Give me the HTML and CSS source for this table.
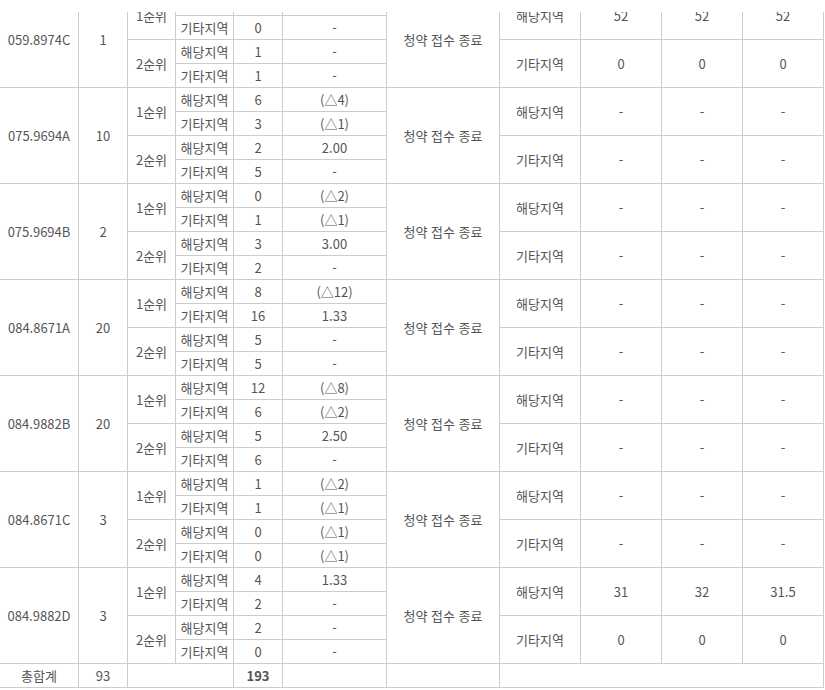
FILE: index.html
```html
<!DOCTYPE html>
<html lang="ko">
<head>
<meta charset="utf-8">
<link rel="stylesheet" href="styles.css">
</head>
<body>
<div class="scroller">
<table class="result">
<colgroup>
<col class="c-type"><col class="c-supply"><col class="c-rank"><col class="c-region"><col class="c-count"><col class="c-rate"><col class="c-status"><col class="c-region2"><col class="c-score"><col class="c-score"><col class="c-score">
</colgroup>
<tbody>
<tr><td rowspan="4">059.8974C</td><td rowspan="4">1</td><td rowspan="2">1순위</td><td>해당지역</td><td>1</td><td>-</td><td rowspan="4">청약 접수 종료</td><td rowspan="2">해당지역</td><td rowspan="2">52</td><td rowspan="2">52</td><td rowspan="2">52</td></tr>
<tr><td>기타지역</td><td>0</td><td>-</td></tr>
<tr><td rowspan="2">2순위</td><td>해당지역</td><td>1</td><td>-</td><td rowspan="2">기타지역</td><td rowspan="2">0</td><td rowspan="2">0</td><td rowspan="2">0</td></tr>
<tr><td>기타지역</td><td>1</td><td>-</td></tr>

<tr><td rowspan="4">075.9694A</td><td rowspan="4">10</td><td rowspan="2">1순위</td><td>해당지역</td><td>6</td><td>(△4)</td><td rowspan="4">청약 접수 종료</td><td rowspan="2">해당지역</td><td rowspan="2">-</td><td rowspan="2">-</td><td rowspan="2">-</td></tr>
<tr><td>기타지역</td><td>3</td><td>(△1)</td></tr>
<tr><td rowspan="2">2순위</td><td>해당지역</td><td>2</td><td>2.00</td><td rowspan="2">기타지역</td><td rowspan="2">-</td><td rowspan="2">-</td><td rowspan="2">-</td></tr>
<tr><td>기타지역</td><td>5</td><td>-</td></tr>

<tr><td rowspan="4">075.9694B</td><td rowspan="4">2</td><td rowspan="2">1순위</td><td>해당지역</td><td>0</td><td>(△2)</td><td rowspan="4">청약 접수 종료</td><td rowspan="2">해당지역</td><td rowspan="2">-</td><td rowspan="2">-</td><td rowspan="2">-</td></tr>
<tr><td>기타지역</td><td>1</td><td>(△1)</td></tr>
<tr><td rowspan="2">2순위</td><td>해당지역</td><td>3</td><td>3.00</td><td rowspan="2">기타지역</td><td rowspan="2">-</td><td rowspan="2">-</td><td rowspan="2">-</td></tr>
<tr><td>기타지역</td><td>2</td><td>-</td></tr>

<tr><td rowspan="4">084.8671A</td><td rowspan="4">20</td><td rowspan="2">1순위</td><td>해당지역</td><td>8</td><td>(△12)</td><td rowspan="4">청약 접수 종료</td><td rowspan="2">해당지역</td><td rowspan="2">-</td><td rowspan="2">-</td><td rowspan="2">-</td></tr>
<tr><td>기타지역</td><td>16</td><td>1.33</td></tr>
<tr><td rowspan="2">2순위</td><td>해당지역</td><td>5</td><td>-</td><td rowspan="2">기타지역</td><td rowspan="2">-</td><td rowspan="2">-</td><td rowspan="2">-</td></tr>
<tr><td>기타지역</td><td>5</td><td>-</td></tr>

<tr><td rowspan="4">084.9882B</td><td rowspan="4">20</td><td rowspan="2">1순위</td><td>해당지역</td><td>12</td><td>(△8)</td><td rowspan="4">청약 접수 종료</td><td rowspan="2">해당지역</td><td rowspan="2">-</td><td rowspan="2">-</td><td rowspan="2">-</td></tr>
<tr><td>기타지역</td><td>6</td><td>(△2)</td></tr>
<tr><td rowspan="2">2순위</td><td>해당지역</td><td>5</td><td>2.50</td><td rowspan="2">기타지역</td><td rowspan="2">-</td><td rowspan="2">-</td><td rowspan="2">-</td></tr>
<tr><td>기타지역</td><td>6</td><td>-</td></tr>

<tr><td rowspan="4">084.8671C</td><td rowspan="4">3</td><td rowspan="2">1순위</td><td>해당지역</td><td>1</td><td>(△2)</td><td rowspan="4">청약 접수 종료</td><td rowspan="2">해당지역</td><td rowspan="2">-</td><td rowspan="2">-</td><td rowspan="2">-</td></tr>
<tr><td>기타지역</td><td>1</td><td>(△1)</td></tr>
<tr><td rowspan="2">2순위</td><td>해당지역</td><td>0</td><td>(△1)</td><td rowspan="2">기타지역</td><td rowspan="2">-</td><td rowspan="2">-</td><td rowspan="2">-</td></tr>
<tr><td>기타지역</td><td>0</td><td>(△1)</td></tr>

<tr><td rowspan="4">084.9882D</td><td rowspan="4">3</td><td rowspan="2">1순위</td><td>해당지역</td><td>4</td><td>1.33</td><td rowspan="4">청약 접수 종료</td><td rowspan="2">해당지역</td><td rowspan="2">31</td><td rowspan="2">32</td><td rowspan="2">31.5</td></tr>
<tr><td>기타지역</td><td>2</td><td>-</td></tr>
<tr><td rowspan="2">2순위</td><td>해당지역</td><td>2</td><td>-</td><td rowspan="2">기타지역</td><td rowspan="2">0</td><td rowspan="2">0</td><td rowspan="2">0</td></tr>
<tr><td>기타지역</td><td>0</td><td>-</td></tr>

<tr class="total"><td>총합계</td><td>93</td><td colspan="2"></td><td class="strong">193</td><td></td><td></td><td colspan="4"></td></tr>
</tbody>
</table>
</div>
</body>
</html>
```

FILE: styles.css
```css
html, body {
  margin: 0;
  padding: 0;
  background: #fff;
}
.scroller {
  margin-top: 12px;
  height: 678px;
  overflow: hidden;
}
.result {
  margin-top: -21px;
  margin-left: -1px;
  width: 825px;
  table-layout: fixed;
  border-collapse: collapse;
  font-family: "Noto Sans CJK KR", "Noto Sans", sans-serif;
  font-size: 13px;
  color: #555;
}
.c-type { width: 79px; }
.c-supply { width: 49px; }
.c-rank { width: 48px; }
.c-region { width: 58px; }
.c-count { width: 49px; }
.c-rate { width: 104px; }
.c-status { width: 113px; }
.c-region2 { width: 81px; }
.c-score { width: 81px; }
.result tr { height: 24px; }
.result td {
  border: 1px solid #cccccc;
  padding: 0;
  text-align: center;
  vertical-align: middle;
  line-height: 18px;
  white-space: nowrap;
}
.result .strong { font-weight: bold; }
```
